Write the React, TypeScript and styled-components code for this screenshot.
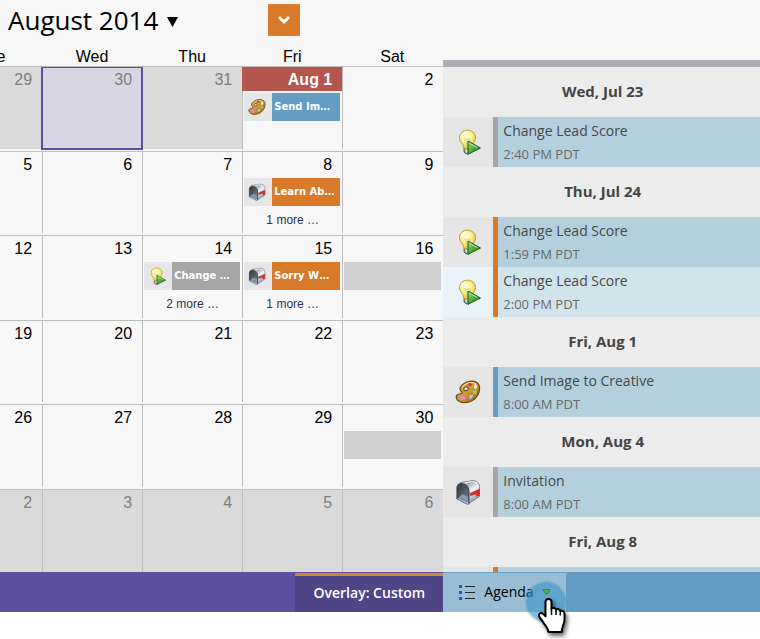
import React from "react";
import styled, { createGlobalStyle, css } from "styled-components";

const sans = `"Open Sans", "Noto Sans", sans-serif`;
const grotesk = `"Liberation Sans", Arial, sans-serif`;

const GlobalStyle = createGlobalStyle`
  * { box-sizing: border-box; }
  body { margin: 0; background: #fff; }
  button { border: 0; padding: 0; margin: 0; background: none; cursor: pointer; }
`;

const Page = styled.div`
  min-height: 100vh;
  overflow: hidden;
  font-family: ${sans};
  color: #000;
`;

const Main = styled.main`
  display: grid;
  grid-template-columns: minmax(0, 7fr) minmax(0, 5fr);
  background: #f7f7f7;
`;

const CalendarPane = styled.section`
  overflow: hidden;
`;

const Header = styled.header`
  display: flex;
  align-items: flex-start;
  height: 46px;
  padding: 4px 8px 0;
`;

const MonthButton = styled.button`
  display: flex;
  align-items: center;
  gap: 9px;
  margin-right: 90px;
  font: 400 26px/32px ${sans};
  color: #000;
  white-space: nowrap;

  svg { margin-top: 4px; }
`;

const ActionButton = styled.button`
  display: grid;
  place-items: center;
  width: 32px;
  height: 32px;
  && { background: #d87a2a; }
`;

const Month = styled.table`
  display: block;
  margin-left: -57px;
  font: 400 16px/24px ${grotesk};

  thead, tbody { display: block; }
`;

const Week = styled.tr`
  display: grid;
  grid-template-columns: repeat(5, minmax(0, 1fr));
  height: 84px;
  padding-bottom: 2px;
  border-top: 1px solid #bdbdbd;

  &:nth-child(odd) { height: 85px; }
  &:last-child { height: 83px; padding-bottom: 0; }
`;

const WeekdayRow = styled.tr`
  display: grid;
  grid-template-columns: repeat(5, minmax(0, 1fr));
  height: 20px;
`;

const Weekday = styled.th`
  padding: 0 2px 0 0;
  font-weight: 400;
  line-height: 22px;
  text-align: center;
`;

const Day = styled.td<{ $outside?: boolean; $selected?: boolean }>`
  position: relative;
  padding: 0;
  border-right: 1px solid #bdbdbd;
  background: ${(p) => (p.$outside ? "#dadada" : "transparent")};
  color: ${(p) => (p.$outside ? "#7d7d7d" : "#000")};

  &:last-child { border-right: 0; }

  ${(p) =>
    p.$selected &&
    css`
      background: #d8d6e4;
      &::after {
        content: "";
        position: absolute;
        inset: 0 -1px -1px -2px;
        border: 2px solid #5c50a0;
        border-top-width: 1px;
      }
    `}
`;

const DayNumber = styled.div<{ $today?: boolean }>`
  height: 24px;
  padding-right: 10px;
  line-height: 26px;
  text-align: right;

  ${(p) =>
    p.$today &&
    css`
      margin-left: -1px;
      background: #b4554e;
      color: #fff;
      font-weight: 700;
    `}
`;

const EventButton = styled.button<{ $tone: string }>`
  display: grid;
  grid-template-columns: 28px minmax(0, 1fr);
  width: calc(100% - 3px);
  height: 28px;
  text-align: left;
  && {
    margin: 2px 2px 0 1px;
    background: ${(p) => p.$tone};
  }
  font: 700 10px/28px "DejaVu Sans", Verdana, sans-serif;
  color: #fff;
  white-space: nowrap;
`;

const EventIcon = styled.span`
  display: grid;
  place-items: center;
  padding-right: 2px;
  background: #e6e6e6;
`;

const EventLabel = styled.span`
  padding-left: 2px;
  overflow: hidden;
`;

const Placeholder = styled.div`
  height: 28px;
  margin: 2px 2px 0 1px;
  background: #cfcfcf;
`;

const MoreLink = styled.a`
  display: block;
  margin-top: 4px;
  font-size: 12px;
  line-height: 20px;
  color: #30304e;
  text-align: center;
  text-decoration: none;
`;

const AgendaPane = styled.aside`
  display: flex;
  flex-direction: column;
  padding-top: 60px;
  contain: size;
`;

const AgendaList = styled.div`
  flex: 1;
  min-height: 0;
  border-top: 7px solid #adacb2;
  background: #ececec;
  overflow: hidden;
`;

const DateHeading = styled.h2`
  margin: 0;
  padding: 0 0 2px 2px;
  font: 700 15px/48px ${sans};
  color: #444;
  text-align: center;
`;

const AgendaItem = styled.article<{ $tone: string; $light?: boolean }>`
  display: grid;
  grid-template-columns: 50px minmax(0, 1fr);
  height: 50px;
  background: ${(p) => (p.$light ? "#eaf3f7" : "#e5e5e5")};

  > div {
    padding: 3px 5px 0;
    border-left: 5px solid ${(p) => p.$tone};
    background: ${(p) => (p.$light ? "#d2e4eb" : "#b3d0dc")};
  }
`;

const AgendaIcon = styled.span`
  display: grid;
  place-items: center;
`;

const AgendaTitle = styled.h3`
  margin: 0;
  font: 400 14px/22px ${sans};
  color: #484848;
`;

const AgendaTime = styled.time`
  display: block;
  font-size: 13px;
  line-height: 24px;
  color: #686868;
`;

const Footer = styled.footer`
  display: grid;
  grid-template-columns: minmax(0, 7fr) minmax(0, 5fr);
  height: 40px;
`;

const OverlayBar = styled.div`
  display: flex;
  justify-content: flex-end;
  padding-top: 1px;
  background: #5d50a0;
`;

const OverlayButton = styled.button`
  width: 148px;
  && {
    padding-bottom: 3px;
    border-top: 3px solid #c98a33;
    background: #504586;
  }
  font: 600 14px/20px ${sans};
  color: #fff;
`;

const AgendaBar = styled.div`
  display: flex;
  padding-top: 1px;
  background: #659cc3;
`;

const AgendaButton = styled.button`
  position: relative;
  display: flex;
  align-items: center;
  width: 123px;
  && {
    padding: 0 0 1px 16px;
    background: #9abdd6;
  }
  font: 400 14px/20px ${sans};
  color: #000;

  > span { margin: 0 9px; }
`;

const Pointer = styled.svg`
  position: absolute;
  left: 77px;
  top: 3px;
  pointer-events: none;
`;

const Bulb = ({ size }: { size: number }) => (
  <svg width={size} height={size} viewBox="-1 0 26 26" aria-hidden="true">
    <defs>
      <radialGradient id="bulbGlow" cx="0.42" cy="0.35" r="0.65">
        <stop offset="0" stopColor="#fffde0" />
        <stop offset="0.55" stopColor="#f8ef92" />
        <stop offset="1" stopColor="#dfc83c" />
      </radialGradient>
      <linearGradient id="playGreen" x1="0" y1="0" x2="1" y2="1">
        <stop offset="0" stopColor="#a4dc7c" />
        <stop offset="0.55" stopColor="#43a52f" />
        <stop offset="1" stopColor="#1e7a1c" />
      </linearGradient>
    </defs>
    <path d="M8 19h7v4l-2 2h-3l-2-2z" fill="#8b929a" stroke="#50545a" strokeWidth="0.8" />
    <path d="M9 20.5h2.5v3H10z" fill="#e4e8ec" />
    <path d="M11.5 1.2c4.6 0 8 3.2 8 7.4 0 3.4-2 5-3 7-.6 1.3-.5 3.4-1.5 3.900H8.300c-1-.5-.8-2.600-1.500-3.900-1.100-2-3.300-3.600-3.300-7 0-4.200 3.400-7.400 8-7.400z" fill="url(#bulbGlow)" stroke="#b99f2b" />
    <path d="M8.500 9.500l2 3v5m4-8l-2 3v5M8.500 10l1.500 1 1.500-1 1.500 1 1.500-1" fill="none" stroke="#e0c95a" strokeWidth="0.8" />
    <path d="M6 8c0-2.800 1.700-4.500 4-5" fill="none" stroke="#fff" strokeWidth="1.400" />
    <path d="M12 12L24.500 19l-12.500 6.300z" fill="url(#playGreen)" stroke="#1b5f1b" strokeLinejoin="round" />
    <path d="M13.300 14.200l8.200 4.500" stroke="#c5ecad" strokeWidth="0.9" />
  </svg>
);

const Palette = ({ size }: { size: number }) => (
  <svg width={size} height={size} viewBox="0 0 26 26" aria-hidden="true">
    <defs>
      <linearGradient id="wood" x1="0" y1="0" x2="1" y2="1">
        <stop offset="0" stopColor="#dcab52" />
        <stop offset="0.5" stopColor="#cf973a" />
        <stop offset="1" stopColor="#8f5a18" />
      </linearGradient>
    </defs>
    <path d="M9 4.500C13 1.500 19.500 1.400 22.500 4c3 2.700 2.600 8 .3 12-2.400 4.200-7.300 7.400-12.500 7.700C5.600 24 1.400 21.500 1.200 18c-.1-2 1.600-2.700 3.300-3 1.800-.4 3-1.100 2.500-2-.5-1-1.900-1-2-3C4.900 7.800 7 6 9 4.500z" fill="url(#wood)" stroke="#6b4512" strokeWidth="1.200" />
    <path d="M7 8c4-4.500 10-5.500 14-3" fill="none" stroke="#f5cf8b" strokeWidth="1.200" />
    <ellipse cx="11" cy="9.800" rx="2.300" ry="1.800" fill="#ece5da" stroke="#6b4512" transform="rotate(-25 11 9.800)" />
    <ellipse cx="15" cy="5.500" rx="2.200" ry="1.600" fill="#c4463e" />
    <ellipse cx="20.500" cy="7.500" rx="1.600" ry="2.400" fill="#f5ecc8" />
    <ellipse cx="19.800" cy="13" rx="2" ry="2.300" fill="#8fcf69" />
    <path d="M13.500 20c2.500 0 4.500-1.500 4.600-4.500l-4.100 1c1 1.300.7 2.300-.5 3.500z" fill="#a6d5ef" />
    <path d="M4.500 17.500c1.500-1 2.500.6 4 .1 2-.7 2.800 1 1.200 2.600-2 2-5 .5-5.200-2.700z" fill="#e58bd4" />
  </svg>
);

const Mailbox = ({ size }: { size: number }) => (
  <svg width={size} height={size} viewBox="0 0 26 26" aria-hidden="true">
    <defs>
      <linearGradient id="steel" x1="0.2" y1="0" x2="0.8" y2="1">
        <stop offset="0" stopColor="#c9d0d7" />
        <stop offset="0.25" stopColor="#a3aeb9" />
        <stop offset="0.5" stopColor="#f0f4f8" />
        <stop offset="0.75" stopColor="#b7c2ce" />
        <stop offset="1" stopColor="#66788c" />
      </linearGradient>
      <linearGradient id="hollow" x1="0" y1="0" x2="1" y2="1">
        <stop offset="0" stopColor="#2d343b" />
        <stop offset="1" stopColor="#77838f" />
      </linearGradient>
    </defs>
    <path d="M2 9c0-3.500 2-5 5-5.700L17 1.700c4-.5 7.500 2 7.500 6v9.800L13.800 24.500V12C13.500 8 10 5.500 7 5.200z" fill="url(#steel)" stroke="#6a7580" strokeWidth="0.8" />
    <path d="M2 19V9.300C2 6 4.500 4.300 7.500 4.800c3.600.6 6.300 3.300 6.300 6.700v13z" fill="url(#hollow)" stroke="#41494f" strokeWidth="1.200" />
    <path d="M3 18.700l4.500-3.700 5.500 3v5.500z" fill="#8d99a6" />
    <path d="M1.300 19.700l3.200-.9 9.300 4.200v2l-1.300.5z" fill="#9fb2cc" stroke="#536883" strokeWidth="0.8" />
    <path d="M15.300 14.300l8.900-3.800v5.800l-2.600.9v-2.500l-6.200 1.700z" fill="#df2c20" stroke="#b3231a" strokeWidth="0.7" />
    <path d="M10 4c4-1.300 9-2 12 .3" fill="none" stroke="#fff" strokeWidth="1" />
  </svg>
);

const icons = { bulb: Bulb, palette: Palette, mailbox: Mailbox };
type IconName = keyof typeof icons;

const ORANGE = "#d87a2a";
const GRAY = "#a5a5a5";
const BLUE = "#659cc3";

interface DayData {
  n: string;
  outside?: boolean;
  selected?: boolean;
  today?: boolean;
  event?: { icon: IconName; label: string; tone: string };
  more?: number;
  placeholder?: boolean;
}

const plain = (...numbers: number[]): DayData[] => numbers.map((n) => ({ n: String(n) }));

const weeks: DayData[][] = [
  [
    { n: "29", outside: true },
    { n: "30", outside: true, selected: true },
    { n: "31", outside: true },
    { n: "Aug 1", today: true, event: { icon: "palette", label: "Send Im…", tone: BLUE } },
    { n: "2" },
  ],
  [
    ...plain(5, 6, 7),
    { n: "8", event: { icon: "mailbox", label: "Learn Ab…", tone: ORANGE }, more: 1 },
    { n: "9" },
  ],
  [
    ...plain(12, 13),
    { n: "14", event: { icon: "bulb", label: "Change …", tone: GRAY }, more: 2 },
    { n: "15", event: { icon: "mailbox", label: "Sorry W…", tone: ORANGE }, more: 1 },
    { n: "16", placeholder: true },
  ],
  plain(19, 20, 21, 22, 23),
  [...plain(26, 27, 28, 29), { n: "30", placeholder: true }],
  plain(2, 3, 4, 5, 6).map((d) => ({ ...d, outside: true })),
];

interface AgendaEntry {
  icon: IconName;
  title?: string;
  time?: string;
  tone: string;
  light?: boolean;
}

const agenda: { date: string; items: AgendaEntry[] }[] = [
  { date: "Wed, Jul 23", items: [{ icon: "bulb", title: "Change Lead Score", time: "2:40 PM PDT", tone: GRAY }] },
  {
    date: "Thu, Jul 24",
    items: [
      { icon: "bulb", title: "Change Lead Score", time: "1:59 PM PDT", tone: ORANGE },
      { icon: "bulb", title: "Change Lead Score", time: "2:00 PM PDT", tone: ORANGE, light: true },
    ],
  },
  { date: "Fri, Aug 1", items: [{ icon: "palette", title: "Send Image to Creative", time: "8:00 AM PDT", tone: BLUE }] },
  { date: "Mon, Aug 4", items: [{ icon: "mailbox", title: "Invitation", time: "8:00 AM PDT", tone: GRAY }] },
  { date: "Fri, Aug 8", items: [{ icon: "mailbox", tone: ORANGE }] },
];

const DayCell = ({ day }: { day: DayData }) => {
  const Icon = day.event && icons[day.event.icon];
  return (
    <Day $outside={day.outside} $selected={day.selected}>
      <DayNumber $today={day.today}>{day.n}</DayNumber>
      {day.event && Icon && (
        <EventButton type="button" $tone={day.event.tone}>
          <EventIcon><Icon size={18} /></EventIcon>
          <EventLabel>{day.event.label}</EventLabel>
        </EventButton>
      )}
      {day.placeholder && <Placeholder />}
      {day.more && <MoreLink href="#more">{day.more} more …</MoreLink>}
    </Day>
  );
};

const HandPointer = () => (
  <Pointer width="54" height="64" viewBox="0 0 54 64" aria-hidden="true">
    <defs>
      <radialGradient id="tapGlow">
        <stop offset="0" stopColor="#3a97c9" stopOpacity="0.6" />
        <stop offset="0.85" stopColor="#3a93c4" stopOpacity="0.62" />
        <stop offset="1" stopColor="#4a9dcc" stopOpacity="0" />
      </radialGradient>
      <filter id="handShadow" x="-30%" y="-30%" width="170%" height="170%">
        <feDropShadow dx="2" dy="3" stdDeviation="2" floodOpacity="0.6" />
      </filter>
    </defs>
    <circle cx="26" cy="26" r="22" fill="url(#tapGlow)" />
    <path d="M23 13.500h7L26.500 19z" fill="#4fb04c" stroke="#2a8449" strokeWidth="0.9" />
    <path
      d="M28.500 23c1.900 0 3 1.200 3 3v6.500c1.500-1 4-.6 4.500 1 1.500-.9 3.700-.3 4.200 1.400 2-.7 4.300.4 4.300 3.100v5.500c0 4.500-2.700 6.500-2.700 12.500H28.500c-.3-4-3.500-6.500-5.500-10-1.300-2.300-3.400-4-4-6.200-.6-2.200 1.900-3.600 3.900-2l2.600 2.400V26c0-1.800 1.100-3 3-3z"
      fill="#fff" stroke="#000" strokeWidth="2" strokeLinejoin="round" filter="url(#handShadow)"
    />
    <path d="M31.500 32v7M36 33.500v5.500M40.300 35v4.500" stroke="#000" strokeWidth="1.500" />
  </Pointer>
);

export default function App() {
  return (
    <Page>
      <GlobalStyle />
      <Main>
        <CalendarPane>
          <Header>
            <MonthButton type="button">
              August 2014
              <svg width="11" height="10" viewBox="0 0 11 10" aria-hidden="true"><path d="M0 0h11L5.500 10z" /></svg>
            </MonthButton>
            <ActionButton type="button" aria-label="More actions">
              <svg width="14" height="10" viewBox="0 0 14 10" aria-hidden="true">
                <path d="M2 2l5 5 5-5" fill="none" stroke="#fff" strokeWidth="2.800" />
              </svg>
            </ActionButton>
          </Header>
          <Month>
            <thead>
              <WeekdayRow>
                {["Tue", "Wed", "Thu", "Fri", "Sat"].map((d) => <Weekday key={d} scope="col">{d}</Weekday>)}
              </WeekdayRow>
            </thead>
            <tbody>
              {weeks.map((week, i) => (
                <Week key={i}>{week.map((day) => <DayCell key={day.n} day={day} />)}</Week>
              ))}
            </tbody>
          </Month>
        </CalendarPane>
        <AgendaPane>
          <AgendaList>
            {agenda.map((group) => (
              <section key={group.date}>
                <DateHeading>{group.date}</DateHeading>
                {group.items.map((item, i) => {
                  const Icon = icons[item.icon];
                  return (
                    <AgendaItem key={i} $tone={item.tone} $light={item.light}>
                      <AgendaIcon><Icon size={26} /></AgendaIcon>
                      <div>
                        {item.title && <AgendaTitle>{item.title}</AgendaTitle>}
                        {item.time && <AgendaTime>{item.time}</AgendaTime>}
                      </div>
                    </AgendaItem>
                  );
                })}
              </section>
            ))}
          </AgendaList>
        </AgendaPane>
      </Main>
      <Footer>
        <OverlayBar>
          <OverlayButton type="button">Overlay: Custom</OverlayButton>
        </OverlayBar>
        <AgendaBar>
          <AgendaButton type="button">
            <svg width="16" height="16" viewBox="0 0 16 16" aria-hidden="true">
              <path d="M6 2.500h10M6 8.500h10M6 14.500h10" stroke="#222" />
              <path d="M0 1h3v3H0zM0 7h3v3H0zM0 13h3v3H0z" fill="#2f55b5" />
            </svg>
            <span>Agenda</span>
            <HandPointer />
          </AgendaButton>
        </AgendaBar>
      </Footer>
    </Page>
  );
}
